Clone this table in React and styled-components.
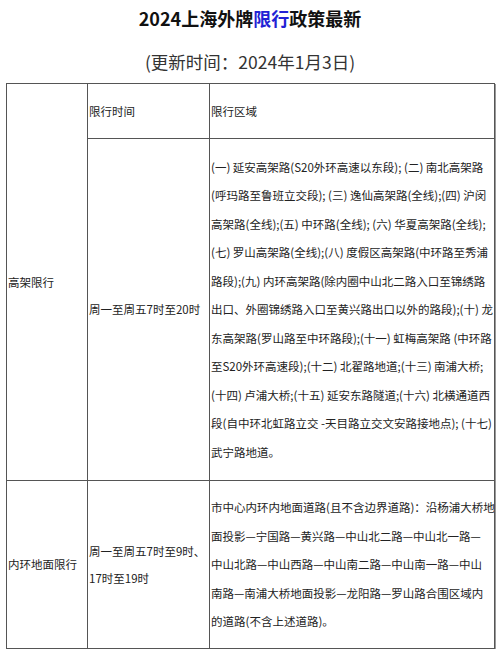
import React from 'react';
import styled, { createGlobalStyle } from 'styled-components';

const GlobalStyle = createGlobalStyle`
  html, body {
    margin: 0;
    padding: 0;
    background: #fff;
  }
  body {
    font-family: "Noto Sans CJK SC", "Noto Sans", sans-serif;
    color: #222;
  }
`;

const Page = styled.div`
  width: 500px;
  padding-top: 6px;
`;

const Title = styled.h1`
  margin: 0;
  height: 24px;
  line-height: 24px;
  text-align: center;
  font-size: 18px;
  font-weight: 700;
  color: #111;
`;

const Blue = styled.span`
  color: #2222d4;
`;

const Subtitle = styled.div`
  margin-top: 20px;
  height: 24px;
  line-height: 24px;
  text-align: center;
  font-size: 17.5px;
  color: #333;
`;

const Table = styled.table`
  margin: 9px 0 0 6px;
  width: 488px;
  border-collapse: collapse;
  table-layout: fixed;
  border: 1px solid #444;
  box-shadow: 1px 1px 0 #999;
  font-size: 11.5px;
  color: #222;
`;

const Cell = styled.td`
  border: 1px solid #555;
  padding: 0 1px;
  vertical-align: middle;
  line-height: ${p => p.$lh || '28.5px'};
  height: ${p => p.$h || 'auto'};
  white-space: nowrap;
  overflow: hidden;
`;

const Line = styled.div`
  display: block;
`;

const highLines = [
  '(一) 延安高架路(S20外环高速以东段); (二) 南北高架路',
  '(呼玛路至鲁班立交段); (三) 逸仙高架路(全线);(四) 沪闵',
  '高架路(全线);(五) 中环路(全线); (六) 华夏高架路(全线);',
  '(七) 罗山高架路(全线);(八) 度假区高架路(中环路至秀浦',
  '路段);(九) 内环高架路(除内圈中山北二路入口至锦绣路',
  '出口、外圈锦绣路入口至黄兴路出口以外的路段);(十) 龙',
  '东高架路(罗山路至中环路段);(十一) 虹梅高架路 (中环路',
  '至S20外环高速段);(十二) 北翟路地道;(十三) 南浦大桥;',
  '(十四) 卢浦大桥;(十五) 延安东路隧道;(十六) 北横通道西',
  '段(自中环北虹路立交 -天目路立交文安路接地点); (十七)',
  '武宁路地道。',
];

const innerLines = [
  '市中心内环内地面道路(且不含边界道路)：沿杨浦大桥地',
  '面投影—宁国路—黄兴路—中山北二路—中山北一路—',
  '中山北路—中山西路—中山南二路—中山南一路—中山',
  '南路—南浦大桥地面投影—龙阳路—罗山路合围区域内',
  '的道路(不含上述道路)。',
];

const Lines = ({ items }) => items.map((t, i) => <Line key={i}>{t}</Line>);

export default function App() {
  return (
    <Page>
      <GlobalStyle />
      <Title>
        2024上海外牌<Blue>限行</Blue>政策最新
      </Title>
      <Subtitle>(更新时间：2024年1月3日)</Subtitle>
      <Table>
        <colgroup>
          <col style={{ width: 81 }} />
          <col style={{ width: 122 }} />
          <col style={{ width: 285 }} />
        </colgroup>
        <tbody>
          <tr>
            <Cell rowSpan={2}>高架限行</Cell>
            <Cell $h="54px">限行时间</Cell>
            <Cell $h="54px">限行区域</Cell>
          </tr>
          <tr>
            <Cell $h="341px">周一至周五7时至20时</Cell>
            <Cell $h="341px">
              <Lines items={highLines} />
            </Cell>
          </tr>
          <tr>
            <Cell $h="167px">内环地面限行</Cell>
            <Cell $h="167px" $lh="27px">
              <Line>周一至周五7时至9时、</Line>
              <Line>17时至19时</Line>
            </Cell>
            <Cell $h="167px" $lh="28.6px">
              <Lines items={innerLines} />
            </Cell>
          </tr>
        </tbody>
      </Table>
    </Page>
  );
}
